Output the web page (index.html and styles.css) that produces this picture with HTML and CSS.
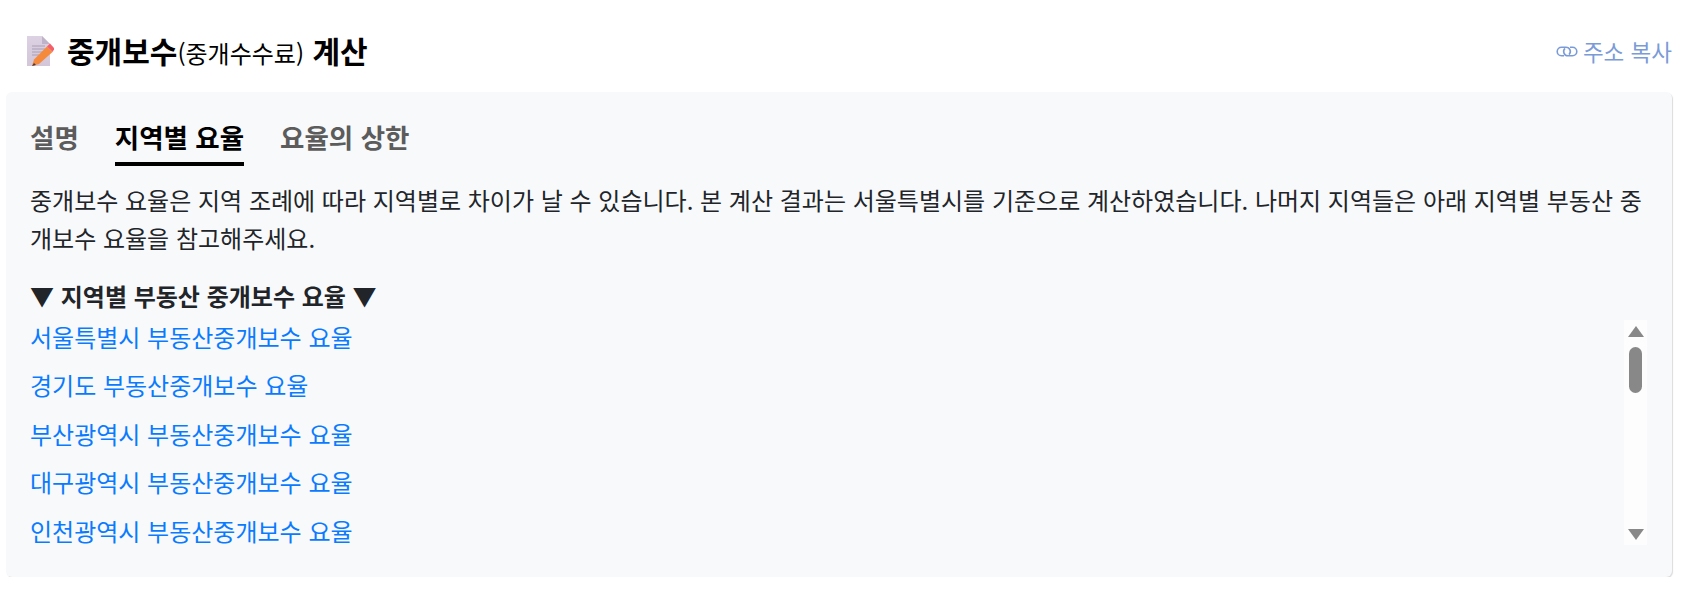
FILE: index.html
```html
<!DOCTYPE html>
<html lang="ko">
<head>
  <meta charset="utf-8">
  <title>중개보수 계산</title>
  <link rel="stylesheet" href="styles.css">
</head>
<body>
  <div class="head">
    <h2 class="title">
      <svg class="title-icon" viewBox="0 0 27 30" width="27" height="30">
        <defs>
          <linearGradient id="doc" x1="0" y1="0" x2="0" y2="1">
            <stop offset="0" stop-color="#dcd2e4"/>
            <stop offset="1" stop-color="#d2c6d8"/>
          </linearGradient>
        </defs>
        <path d="M0 0H15L23 8V30H0Z" fill="url(#doc)"/>
        <path d="M15 0L23 8H15Z" fill="#bfb3c9"/>
        <path d="M5 10H18M5 13H18M5 16H16M5 19H12" stroke="#a99eb4" stroke-width="1" fill="none"/>
        <path d="M20 10.5L25.5 16L12 28L5 30L7 23.5Z" fill="#f58a3c"/>
        <path d="M20 10.5L23 7.5L27.5 12.5L25.5 16Z" fill="#f4606a"/>
        <path d="M7 27L5 30L9 29Z" fill="#4b3a3a"/>
      </svg>
      <span>중개보수<small>(중개수수료)</small> 계산</span>
    </h2>
    <a class="copy" href="#">
      <svg viewBox="0 0 22 11" width="22" height="11" fill="none" stroke="#7b9bd8" stroke-width="1.6">
        <path d="M8 9.8H5.5a4.3 4.3 0 0 1 0-8.6H10a4.3 4.3 0 0 1 3 7.4"/>
        <path d="M14 1.2h2.5a4.3 4.3 0 0 1 0 8.6H12a4.3 4.3 0 0 1-3-7.4"/>
      </svg>
      주소 복사
    </a>
  </div>

  <div class="card">
    <div class="tabs">
      <a class="tab" href="#">설명</a>
      <a class="tab active" href="#">지역별 요율</a>
      <a class="tab" href="#">요율의 상한</a>
    </div>
    <p class="desc">중개보수 요율은 지역 조례에 따라 지역별로 차이가 날 수 있습니다. 본 계산 결과는 서울특별시를 기준으로 계산하였습니다. 나머지 지역들은 아래 지역별 부동산 중개보수 요율을 참고해주세요.</p>
    <div class="list-title">▼ 지역별 부동산 중개보수 요율 ▼</div>
    <div class="region-box">
      <ul class="region-list">
        <li><a href="#">서울특별시 부동산중개보수 요율</a></li>
        <li><a href="#">경기도 부동산중개보수 요율</a></li>
        <li><a href="#">부산광역시 부동산중개보수 요율</a></li>
        <li><a href="#">대구광역시 부동산중개보수 요율</a></li>
        <li><a href="#">인천광역시 부동산중개보수 요율</a></li>
      </ul>
      <div class="scrollbar">
        <span class="arrow-up"></span>
        <span class="thumb"></span>
        <span class="arrow-down"></span>
      </div>
    </div>
  </div>
</body>
</html>
```

FILE: styles.css
```css
body {
  margin: 0;
  background: #fff;
  color: #212529;
  font-family: "Noto Sans CJK KR", "Noto Sans", sans-serif;
}

.head {
  display: flex;
  justify-content: space-between;
  align-items: center;
  height: 92px;
  padding: 8px 26px 0 27px;
  box-sizing: border-box;
}

.title {
  display: flex;
  align-items: center;
  margin: 0;
  color: #000;
  font-size: 30px;
  font-weight: 700;
}

.title-icon {
  margin: 2px 13px 0 0;
}

.title small {
  font-size: 24px;
  font-weight: 400;
}

.copy {
  display: flex;
  align-items: center;
  gap: 5px;
  margin-top: 2px;
  color: #7b9bd8;
  font-size: 22.5px;
  text-decoration: none;
}

.card {
  margin: 0 26px 0 6px;
  height: 485px;
  padding: 25px 22px 0 24px;
  box-sizing: border-box;
  background: #f8f9fb;
  border-radius: 6px;
  box-shadow: 1px 1px 1px rgba(0, 0, 0, 0.14);
}

.tabs {
  display: flex;
  gap: 36px;
}

.tab {
  padding: 0 0 6px;
  border-bottom: 4px solid transparent;
  color: #5c5c5c;
  font-size: 26.5px;
  font-weight: 700;
  line-height: 39px;
  text-decoration: none;
}

.tab.active {
  color: #000;
  border-bottom-color: #000;
}

.desc {
  margin: 15px 0 21px;
  font-size: 24px;
  line-height: 38px;
}

.list-title {
  font-size: 24px;
  font-weight: 700;
  line-height: 35px;
}

.region-box {
  display: flex;
  justify-content: space-between;
  align-items: flex-start;
}

.region-list {
  list-style: none;
  margin: 0;
  padding: 0;
}

.region-list li {
  height: 48.4px;
  line-height: 48.4px;
  font-size: 24px;
}

.region-list a {
  color: #0a7bff;
  text-decoration: none;
}

.scrollbar {
  display: flex;
  flex-direction: column;
  align-items: center;
  width: 23px;
  height: 225px;
  margin: 7px 3px 0 0;
  padding: 6px 0 5px;
  box-sizing: border-box;
  background: #fdfdfd;
}

.arrow-up {
  border: 8px solid transparent;
  border-top: 0;
  border-bottom: 11px solid #888;
}

.arrow-down {
  margin-top: auto;
  border: 8px solid transparent;
  border-bottom: 0;
  border-top: 11px solid #888;
}

.thumb {
  width: 13px;
  height: 46px;
  margin-top: 10px;
  background: #888;
  border-radius: 7px;
}
```
